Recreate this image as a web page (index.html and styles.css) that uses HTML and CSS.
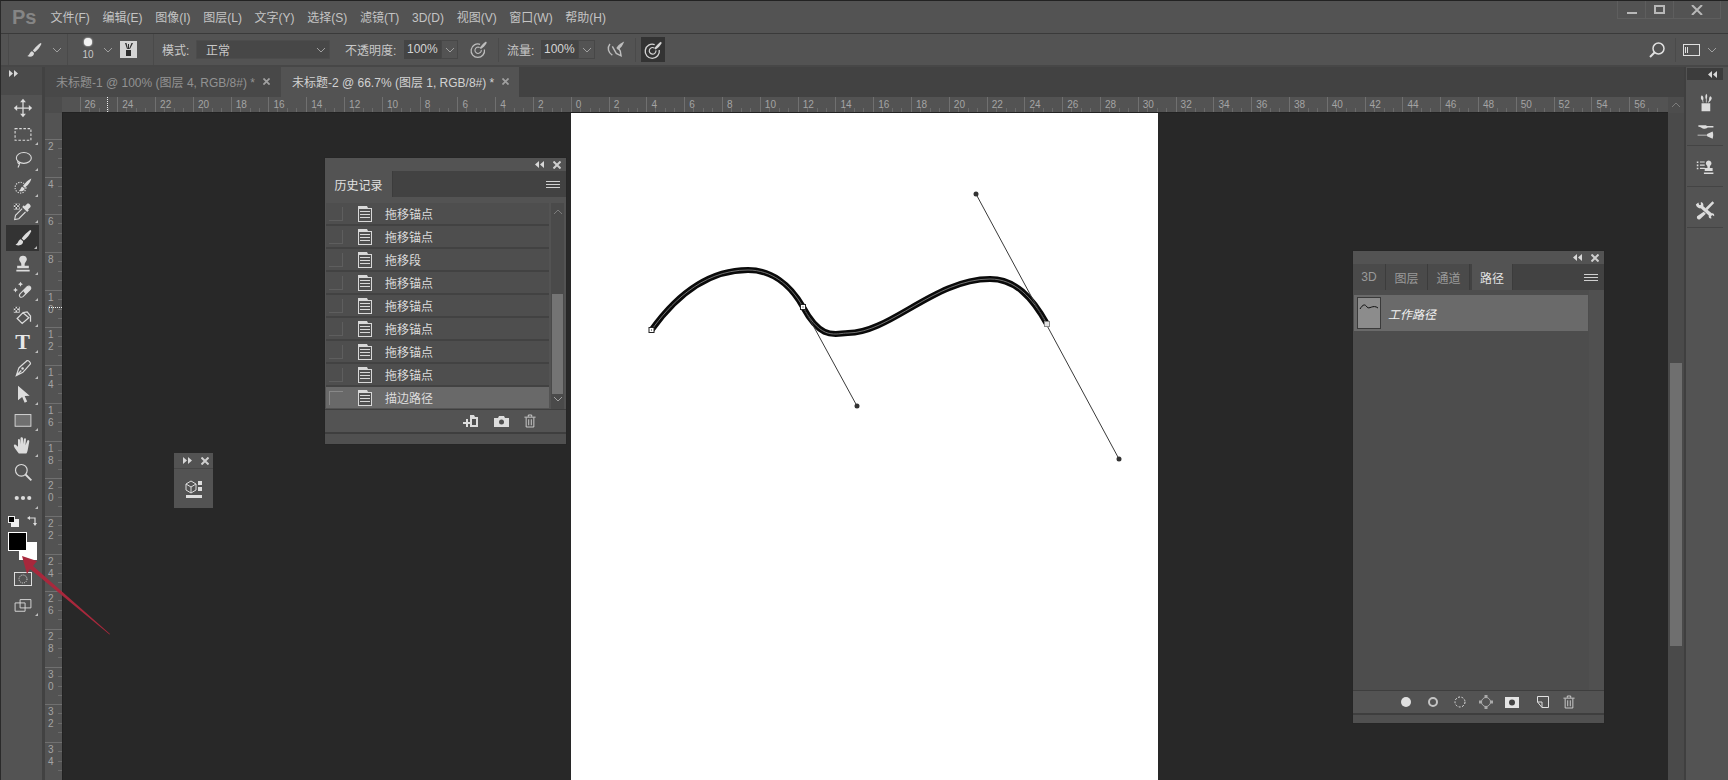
FILE: index.html
```html
<!DOCTYPE html>
<html lang="zh">
<head>
<meta charset="utf-8">
<title>Photoshop</title>
<link rel="stylesheet" href="styles.css">
</head>
<body>
<svg class="defs" width="0" height="0">
  <defs>
    <symbol id="i-brush" viewBox="0 0 24 24"><path fill="currentColor" d="M21 2.500c-3 1.500-8 6.500-10.500 10l2.500 2.500c3.500-2.800 7.500-7.500 9-11.500zM9.500 13.500c-3.500.8-2.500 4.500-6.500 6.500 4 2 9.500.5 9-4z"/></symbol>
    <symbol id="i-chev" viewBox="0 0 10 6"><path fill="none" stroke="currentColor" stroke-width="1" d="M1 1l4 4 4-4"/></symbol>
    <symbol id="i-doc" viewBox="0 0 14 16"><path fill="#d8d8d8" d="M0 0h9l1 2h4v14H0z"/><path fill="#505050" d="M1 3h12v12H1z"/><path stroke="#d8d8d8" d="M2 5.500h10M2 8.500h10M2 11.500h10"/></symbol>
    <symbol id="i-trash" viewBox="0 0 14 16"><path fill="none" stroke="currentColor" d="M2.500 4v11h9V4M.5 3.500h13M5 3V1h4v2M5.500 6v7M8.500 6v7"/></symbol>
    <symbol id="i-press" viewBox="0 0 24 24"><g fill="none" stroke="currentColor"><path stroke-width="1.600" d="M14 5.500A8.500 8.500 0 1 0 19.500 12"/><path stroke-width="1.400" d="M13.500 9.500a4 4 0 1 0 2 3"/></g><path fill="currentColor" d="M21.500 2c-2 1-6 5-8 8l1.500 1.500c3-2 6-5 7.500-8z"/></symbol>
    <symbol id="i-left2" viewBox="0 0 9 7"><path fill="currentColor" d="M4 0v7L0 3.500zM9 0v7L5 3.500z"/></symbol>
    <symbol id="i-right2" viewBox="0 0 9 7"><path fill="currentColor" d="M0 0v7l4-3.500zM5 0v7l4-3.500z"/></symbol>
    <symbol id="i-x" viewBox="0 0 8 8"><path stroke="currentColor" stroke-width="2" d="M.5.500l7 7M7.500.500l-7 7"/></symbol>
  </defs>
</svg>
<div class="app">
  <header class="titlebar">
    <div class="logo">Ps</div>
    <nav class="menu">
      <span>文件(F)</span><span>编辑(E)</span><span>图像(I)</span><span>图层(L)</span><span>文字(Y)</span><span>选择(S)</span><span>滤镜(T)</span><span>3D(D)</span><span>视图(V)</span><span>窗口(W)</span><span>帮助(H)</span>
    </nav>
    <div class="winbtns">
      <div class="winbtn w-min"><i class="w-min-glyph"></i></div>
      <div class="winbtn w-max"><i class="w-max-glyph"></i></div>
      <div class="winbtn w-close"><svg width="12" height="10" viewBox="0 0 12 10"><path stroke="#b8b8b8" stroke-width="2" d="M1 0l10 10M11 0L1 10"/></svg></div>
    </div>
  </header>

  <section class="options">
    <div class="opt-group g-tool">
      <svg class="ic-brush-opt"><use href="#i-brush"/></svg>
      <svg class="chev"><use href="#i-chev"/></svg>
    </div>
    <div class="opt-group g-size">
      <div class="sizepreview"><i class="dot"></i><span>10</span></div>
      <svg class="chev"><use href="#i-chev"/></svg>
      <div class="preset"><svg width="13" height="13" viewBox="0 0 13 13"><path fill="#2e2e2e" d="M4 7h5v6H4zM3 0h1.500L6 6H5zM6 1h1v5H6zM9.500 0H11L8 6H7z"/></svg></div>
    </div>
    <span class="lbl l-mode">模式:</span>
    <div class="select"><span>正常</span><svg class="chev"><use href="#i-chev"/></svg></div>
    <span class="lbl l-opacity">不透明度:</span>
    <div class="input i-opacity">100%</div>
    <div class="drop"><svg class="chev"><use href="#i-chev"/></svg></div>
    <svg class="press p-a"><use href="#i-press"/></svg>
    <i class="vsep s-a"></i>
    <span class="lbl l-flow">流量:</span>
    <div class="input i-flow">100%</div>
    <div class="drop"><svg class="chev"><use href="#i-chev"/></svg></div>
    <svg class="press p-b" viewBox="0 0 24 24"><path fill="none" stroke="currentColor" stroke-width="1.800" d="M5 5C1 10 3 16 8 19M8 8l5 9 6 3-1-6-3-5"/><path fill="currentColor" d="M23 2c-3 1-7 4-10 8l2.500 2.500c3-2 6-6 7.500-10.500z"/></svg>
    <i class="vsep s-b"></i>
    <div class="toggled"><svg><use href="#i-press"/></svg></div>
    <div class="opt-right">
      <svg class="search" viewBox="0 0 18 18"><circle cx="10.500" cy="7.500" r="5.500" fill="none" stroke="#e0e0e0" stroke-width="1.500"/><path stroke="#e0e0e0" stroke-width="2" d="M6.500 11.500L2 16"/></svg>
      <i class="vsep s-c"></i>
      <svg class="workspace" viewBox="0 0 17 12"><rect x=".5" y=".5" width="16" height="11" fill="none" stroke="#e0e0e0"/><path stroke="#e0e0e0" d="M2.500 3v6M4.500 3v6"/></svg>
      <svg class="chev c-work"><use href="#i-chev"/></svg>
    </div>
  </section>

  <main class="workspace-area">
    <aside class="toolbar">
      <div class="tool-head"><svg class="arrows"><use href="#i-right2"/></svg></div>
      <div class="tool"><svg viewBox="0 0 24 24"><path fill="none" stroke="currentColor" stroke-width="1.500" d="M12 4v16M4 12h16"/><path fill="currentColor" d="M12 1l3.500 4h-7zM12 23l-3.500-4h7zM1 12l4-3.500v7zM23 12l-4 3.500v-7z"/></svg></div>
      <div class="tool fly"><svg viewBox="0 0 24 24"><rect x="2.500" y="5.500" width="19" height="14" fill="none" stroke="currentColor" stroke-width="1.300" stroke-dasharray="3 2"/></svg></div>
      <div class="tool fly"><svg viewBox="0 0 24 24"><ellipse cx="13" cy="9.500" rx="9" ry="6.500" fill="none" stroke="currentColor" stroke-width="1.300"/><path fill="none" stroke="currentColor" stroke-width="1.300" d="M6 13c-1 3 1 4 2 2 0 2-1 4-2 6"/></svg></div>
      <div class="tool fly"><svg viewBox="0 0 24 24"><circle cx="9" cy="14" r="6.500" fill="none" stroke="currentColor" stroke-width="1.300" stroke-dasharray="1.500 1.500"/><path fill="currentColor" d="M22 3c-3 1-8 6-10 9l2 2c3-2 7-6 8-11zM11 13c-2 1-1 3-4 5 3 1 7 0 7-3z"/></svg></div>
      <div class="tool fly"><svg viewBox="0 0 24 24"><path fill="currentColor" d="M17 2c2-1 5 2 4 4l-3 3 1 1-2 2-6-6 2-2 1 1z"/><path fill="none" stroke="currentColor" stroke-width="1.300" d="M11 8l-8 8-1 5 5-1 8-8"/><path fill="#ddd" d="M1 2h7v7H1z"/><path fill="#333" d="M1 2h2v2H1zM5 2h2v2H5zM3 4h2v2H3zM7 4h1v2H7zM1 6h2v2H1zM5 6h2v2H5z"/></svg></div>
      <div class="tool fly active"><svg viewBox="0 0 24 24"><use href="#i-brush"/></svg></div>
      <div class="tool fly"><svg viewBox="0 0 24 24"><path fill="currentColor" d="M12 2a4.500 4.500 0 0 1 3 8c-1 1-1 2-1 4h5v3H5v-3h5c0-2 0-3-1-4a4.500 4.500 0 0 1 3-8zM4 19h16v2H4z"/></svg></div>
      <div class="tool fly"><svg viewBox="0 0 24 24"><path fill="none" stroke="currentColor" stroke-width="1.300" d="M9 16l8-8c3-2 6 1 3 4l-8 8c-3 2-6-1-3-4z"/><path fill="currentColor" d="M12 13l5-5c3-2 6 1 3 4l-5 5zM3 9l1 2 2 1-2 1-1 2-1-2-2-1 2-1zM9 2l1 2 2 1-2 1-1 2-1-2-2-1 2-1z"/></svg></div>
      <div class="tool fly"><svg viewBox="0 0 24 24"><path fill="none" stroke="currentColor" stroke-width="1.500" d="M12 8l-7 7 6 6 8-7zM12 8l5-1 4 5v7"/><path fill="#ddd" d="M1 1h7v7H1z"/><path fill="#333" d="M1 1h2v2H1zM5 1h2v2H5zM3 3h2v2H3zM1 5h2v2H1zM5 5h2v2H5z"/></svg></div>
      <div class="tool fly"><span class="type-t">T</span></div>
      <div class="tool fly"><svg viewBox="0 0 24 24"><path fill="none" stroke="currentColor" stroke-width="1.400" d="M4 21l3-9c4-4 8-7 10-9 2 0 4 2 4 4-2 2-5 6-9 10zM4 21l6-6"/><circle cx="11.500" cy="12.500" r="1.500" fill="currentColor"/></svg></div>
      <div class="tool fly"><svg viewBox="0 0 24 24"><path fill="currentColor" d="M6 2l14 12-6 .5 3 6.500-3 1.500-3-7-5 4z"/></svg></div>
      <div class="tool fly"><svg viewBox="0 0 24 24"><rect x="2.500" y="5.500" width="19" height="14" fill="#707070" stroke="currentColor" stroke-width="1.100"/></svg></div>
      <div class="tool fly"><svg viewBox="0 0 24 24"><path fill="currentColor" d="M7 21c-2-3-5-6-6-9 0-2 2-2 3-1l2 2V5c0-2 2-2 2.500 0L9 10V3c0-2 2.500-2 3 0v7l1-6c.5-2 3-1.500 2.500.5L15 11l2-5c.5-2 3-1 2.500 1L18 15c-.5 3-1 5-2 6z"/></svg></div>
      <div class="tool"><svg viewBox="0 0 24 24"><circle cx="10" cy="10" r="7" fill="none" stroke="currentColor" stroke-width="1.400"/><path stroke="currentColor" stroke-width="2.200" d="M15 15l7 7"/></svg></div>
      <div class="tool fly"><svg viewBox="0 0 24 24"><circle cx="4.500" cy="12" r="2.500" fill="currentColor"/><circle cx="12" cy="12" r="2.500" fill="currentColor"/><circle cx="19.500" cy="12" r="2.500" fill="currentColor"/></svg></div>
      <div class="color-mini">
        <svg class="defaults" viewBox="0 0 11 11"><rect x="3" y="3" width="8" height="8" fill="#eee"/><rect x=".5" y=".5" width="6" height="6" fill="#000" stroke="#eee"/></svg>
        <svg class="swap" viewBox="0 0 11 11"><path fill="none" stroke="#ddd" stroke-width="1.200" d="M3 2h5v6"/><path fill="#ddd" d="M3 0v4L0 2zM6 7h4l-2 3z"/></svg>
      </div>
      <div class="swatches"><i class="bg"></i><i class="fg"></i></div>
      <div class="mask-tool"><svg viewBox="0 0 18 14"><rect x=".5" y=".5" width="17" height="13" fill="none" stroke="#ddd"/><circle cx="9" cy="7" r="4" fill="none" stroke="#ddd" stroke-dasharray="1 1"/></svg></div>
      <div class="tool fly screen"><svg viewBox="0 0 24 24"><path fill="none" stroke="currentColor" stroke-width="1.100" d="M8.500 5.500h13v10h-13zM2.500 9.500h12v10h-12z"/></svg></div>
    </aside>

    <section class="docarea">
      <div class="tabs">
        <div class="tab"><span>未标题-1 @ 100% (图层 4, RGB/8#) *</span><svg class="tabx"><use href="#i-x"/></svg></div>
        <div class="tab current"><span>未标题-2 @ 66.7% (图层 1, RGB/8#) *</span><svg class="tabx"><use href="#i-x"/></svg></div>
      </div>
      <div class="view">
        <div class="corner"></div>
        <div class="hruler">
          <span>26</span><span>24</span><span>22</span><span>20</span><span>18</span><span>16</span><span>14</span><span>12</span><span>10</span><span>8</span><span>6</span><span>4</span><span>2</span><span>0</span><span>2</span><span>4</span><span>6</span><span>8</span><span>10</span><span>12</span><span>14</span><span>16</span><span>18</span><span>20</span><span>22</span><span>24</span><span>26</span><span>28</span><span>30</span><span>32</span><span>34</span><span>36</span><span>38</span><span>40</span><span>42</span><span>44</span><span>46</span><span>48</span><span>50</span><span>52</span><span>54</span><span>56</span>
        </div>
        <div class="sbhead"><svg class="chev up"><use href="#i-chev"/></svg></div>
        <div class="vruler">
          <span>2</span><span>4</span><span>6</span><span>8</span><span>1<br>0</span><span>1<br>2</span><span>1<br>4</span><span>1<br>6</span><span>1<br>8</span><span>2<br>0</span><span>2<br>2</span><span>2<br>4</span><span>2<br>6</span><span>2<br>8</span><span>3<br>0</span><span>3<br>2</span><span>3<br>4</span>
        </div>
        <div class="stage">
          <div class="page">
            <svg class="drawing" viewBox="571 113 587 667">
              <path class="stroke-ink" d="M651.500 330C668 307 700 270 748 270C771 270 790 284 803 307C822 342 836 333 848 333C890 333 935 279 990 279C1015 279 1032 297 1047 324"/>
              <path class="stroke-path" d="M651.500 330C668 307 700 270 748 270C771 270 790 284 803 307C822 342 836 333 848 333C890 333 935 279 990 279C1015 279 1032 297 1047 324"/>
              <path class="handle" d="M803 307L857 406M976 194L1119 459"/>
              <circle class="knob" cx="857" cy="406" r="2.500"/>
              <circle class="knob" cx="976" cy="194" r="2.500"/>
              <circle class="knob" cx="1119" cy="459" r="2.500"/>
              <rect class="anchor" x="649" y="327.500" width="5" height="5"/>
              <rect class="anchor-dot" x="651" y="329.500" width="1" height="1"/>
              <rect class="anchor" x="800.500" y="304.500" width="5" height="5"/>
              <rect class="anchor-dot" x="802.500" y="306.500" width="1" height="1"/>
              <rect class="anchor last" x="1044.500" y="321.500" width="5" height="5"/>
            </svg>
          </div>
        </div>
        <div class="vscroll"><div class="thumb"></div></div>
      </div>
    </section>

    <aside class="dock">
      <div class="dock-head"><svg class="arrows"><use href="#i-left2"/></svg></div>
      <div class="dock-group g-two">
        <svg viewBox="0 0 24 24"><path fill="currentColor" d="M7 13h11v10H7zM7 3c2 0 3 3 2 6l.5 3h-1L8 9C6 8 5.500 5 7 3zM13 1c2 2 1 5 .5 7v4h-1V8c-1-2-1-5 .5-7zM18 4c2 1 3 3 0 6l-2 2h-1l1.500-3c0-2 0-4 1.500-5z"/></svg>
        <svg viewBox="0 0 24 24"><path fill="currentColor" d="M3 4h8c2 0 3 1 4 1h7v2h-7c-1 0-2 2-5 1.500C8 8.500 6 6 3 6zM2 16h12v-1l7-3c1 3 1 6 0 9l-7-3v-1H2z"/></svg>
      </div>
      <div class="dock-group g-one">
        <svg viewBox="0 0 24 24"><path fill="currentColor" d="M1 3h2v2H1zM1 7h2v2H1zM1 11h2v2H1zM5 3h6v1.500H5zM5 7h6v1.500H5zM5 11h6v1.500H5zM16 2a3.500 3.500 0 0 1 2.500 6c-1 1-1 2-1 3.500H21V15H11v-3.500h3.500c0-1.500 0-2.500-1-3.500A3.500 3.500 0 0 1 16 2zM10 17h12v2H10z"/></svg>
      </div>
      <div class="dock-group g-one">
        <svg viewBox="0 0 24 24"><path fill="currentColor" d="M1 5.500L4 3l1 3 2 0 0-3.500c2.500.5 3.500 2.500 3 5l10 8.500c2-.500 3.500 1 3 3.500l-2.500-1.500-1.500 2 1 2c-2.500.5-4-1-3.500-3.500L7 10c-2.500.5-5-1-6-4.500z"/><path fill="currentColor" d="M21 1.500l2 2-8 8.500-2.500-2zM10.500 14l2.500 2.500-7 6.500c-2.500 1-4.500-1-3.500-3.500z"/></svg>
      </div>
    </aside>
  </main>

  <div class="float-mini">
    <div class="fhead"><svg class="arrows"><use href="#i-right2"/></svg><svg class="fx"><use href="#i-x"/></svg></div>
    <div class="mini-body"><svg width="18" height="18" viewBox="0 0 18 18"><path fill="none" stroke="#ddd" d="M6 1L1 4v6l5 3 5-3V4zM1 4l5 3 5-3M6 7v6"/><path fill="#ddd" d="M13 1h4v4h-4zM13 7h4v4h-4zM1 15h16v3H1z"/></svg></div>
  </div>

  <div class="panel history">
    <div class="fhead"><svg class="arrows"><use href="#i-left2"/></svg><svg class="fx"><use href="#i-x"/></svg></div>
    <div class="ptabs"><div class="ptab on">历史记录</div><div class="pmenu"><i></i><i></i><i></i></div></div>
    <div class="hbody">
      <div class="hrows">
        <div class="hrow"><i class="cb"></i><svg class="doc"><use href="#i-doc"/></svg><span>拖移锚点</span></div>
        <div class="hrow"><i class="cb"></i><svg class="doc"><use href="#i-doc"/></svg><span>拖移锚点</span></div>
        <div class="hrow"><i class="cb"></i><svg class="doc"><use href="#i-doc"/></svg><span>拖移段</span></div>
        <div class="hrow"><i class="cb"></i><svg class="doc"><use href="#i-doc"/></svg><span>拖移锚点</span></div>
        <div class="hrow"><i class="cb"></i><svg class="doc"><use href="#i-doc"/></svg><span>拖移锚点</span></div>
        <div class="hrow"><i class="cb"></i><svg class="doc"><use href="#i-doc"/></svg><span>拖移锚点</span></div>
        <div class="hrow"><i class="cb"></i><svg class="doc"><use href="#i-doc"/></svg><span>拖移锚点</span></div>
        <div class="hrow"><i class="cb"></i><svg class="doc"><use href="#i-doc"/></svg><span>拖移锚点</span></div>
        <div class="hrow sel"><i class="cb"></i><svg class="doc"><use href="#i-doc"/></svg><span>描边路径</span></div>
      </div>
      <div class="hscroll">
        <svg class="chev up"><use href="#i-chev"/></svg>
        <div class="hthumb"></div>
        <svg class="chev"><use href="#i-chev"/></svg>
      </div>
    </div>
    <div class="pfoot hfoot">
      <svg width="16" height="15" viewBox="0 0 16 15"><path fill="#ddd" d="M7 1h4l1 2h3v10H7zM0 8h3V5h2v3h3v2H5v3H3v-3H0z"/><path fill="#505050" d="M9 5h4v6H9z"/></svg>
      <svg width="15" height="13" viewBox="0 0 15 13"><path fill="#ddd" d="M0 3h4l1-2h5l1 2h4v9H0z"/><circle cx="7.500" cy="7" r="2.500" fill="#505050"/></svg>
      <svg class="trash"><use href="#i-trash"/></svg>
    </div>
    <div class="pgrip"></div>
  </div>

  <div class="panel paths">
    <div class="fhead"><svg class="arrows"><use href="#i-left2"/></svg><svg class="fx"><use href="#i-x"/></svg></div>
    <div class="ptabs">
      <div class="ptab t-3d">3D</div><div class="ptab">图层</div><div class="ptab">通道</div><div class="ptab on">路径</div>
      <div class="pmenu"><i></i><i></i><i></i></div>
    </div>
    <div class="pbody">
      <div class="pathrow">
        <div class="paththumb"><svg width="22" height="8" viewBox="0 0 22 8"><path fill="none" stroke="#111" d="M2 6C5 1 7 1 9 4c2 3 6-3 11 1"/></svg></div>
        <em>工作路径</em>
      </div>
    </div>
    <div class="pfoot pathfoot">
      <svg width="12" height="12" viewBox="0 0 12 12"><circle cx="6" cy="6" r="5" fill="#e0e0e0"/></svg>
      <svg width="12" height="12" viewBox="0 0 12 12"><circle cx="6" cy="6" r="4" fill="none" stroke="#c4c4c4" stroke-width="2"/></svg>
      <svg width="12" height="12" viewBox="0 0 12 12"><circle cx="6" cy="6" r="5" fill="none" stroke="#e0e0e0" stroke-dasharray="2 1.500"/></svg>
      <svg width="14" height="14" viewBox="0 0 14 14"><circle cx="7" cy="7" r="4.500" fill="none" stroke="#aaa"/><path fill="#aaa" d="M5.500 0h3v3h-3zM5.500 11h3v3h-3zM0 5.500h3v3H0zM11 5.500h3v3h-3z"/></svg>
      <svg width="14" height="11" viewBox="0 0 14 11"><rect width="14" height="11" fill="#e4e4e4"/><circle cx="7" cy="5.500" r="3" fill="#444"/></svg>
      <svg width="12" height="12" viewBox="0 0 12 12"><path fill="none" stroke="#e0e0e0" d="M11.500.5v11H5L.5 6V.5zM5 11.500V6H.5"/></svg>
      <svg class="trash"><use href="#i-trash"/></svg>
    </div>
    <div class="pgrip"></div>
  </div>

  <svg class="arrow" width="92" height="82" viewBox="0 0 92 82"><path fill="#a8283c" d="M2 2l15 5-4 5 77 68-.5.5L10 15l-3 5z"/></svg>
  <i class="cursor-h"></i>
  <i class="cursor-v"></i>
</div>
</body>
</html>
```

FILE: styles.css
```css
* { box-sizing: border-box; }
html, body { margin: 0; height: 100%; background: #282828; }
body { overflow: hidden; font-family: "Liberation Sans", "Noto Sans CJK SC", sans-serif; font-size: 12px; color: #c8c8c8; }
.defs { position: absolute; }
svg { display: block; }
i, b { font-style: normal; font-weight: normal; }

.app { position: relative; width: 1728px; height: 780px; background: #535353; display: flex; flex-direction: column; overflow: hidden; border-left: 1px solid #2a2a2a; border-top: 1px solid #222; }
.arrows { width: 9px; height: 7px; color: #d8d8d8; flex: none; }

/* title bar */
.titlebar { height: 33px; flex: none; display: flex; align-items: center; border-bottom: 1px solid #3a3a3a; position: relative; }
.logo { margin-left: 11px; width: 38.500px; font-size: 20px; font-weight: bold; color: #858585; padding-top: 1px; }
.menu { display: flex; gap: 12.700px; color: #c4c4c4; line-height: 16px; padding-top: 1px; }
.winbtns { margin-left: auto; margin-right: 7px; align-self: flex-start; display: flex; height: 18px; border: 1px solid #5e5e5e; border-top: 0; }
.winbtn { height: 100%; display: flex; align-items: center; justify-content: center; border-right: 1px solid #5e5e5e; }
.w-min { width: 28px; }
.w-max { width: 28px; }
.w-close { width: 46px; border-right: 0; }
.w-min-glyph { width: 10px; height: 2px; margin-top: 6px; background: #b8b8b8; }
.w-max-glyph { width: 11px; height: 9px; border: 2px solid #b8b8b8; border-width: 2px 2px; }

/* options bar */
.options { height: 33px; flex: none; display: flex; align-items: center; padding-left: 7px; border-bottom: 2px solid #474747; color: #c8c8c8; }
.opt-group { height: 100%; display: flex; align-items: center; position: relative; }
.g-tool { width: 60px; border-left: 1px solid #4a4a4a; border-right: 1px solid #4a4a4a; }
.ic-brush-opt { width: 18px; height: 18px; margin-left: 16px; color: #d8d8d8; }
.chev { width: 10px; height: 6px; color: #a0a0a0; flex: none; }
.g-tool .chev { margin-left: 9px; }
.g-size { width: 86px; border-right: 1px solid #4a4a4a; }
.sizepreview { width: 16px; margin-left: 12px; display: flex; flex-direction: column; align-items: center; font-size: 10px; line-height: 12px; }
.sizepreview .dot { width: 8px; height: 8px; border-radius: 50%; background: #f2f2f2; margin-bottom: 3px; box-shadow: 0 0 2px #fff; }
.g-size .chev { margin-left: 7px; }
.preset { width: 17px; height: 17px; margin-left: 7px; background: #d4d4d4; display: flex; align-items: center; justify-content: center; }
.lbl { flex: none; white-space: nowrap; }
.l-mode { margin-left: 8px; width: 29px; }
.select { width: 134px; height: 19px; margin-left: 5px; background: #474747; border-radius: 2px; display: flex; align-items: center; justify-content: space-between; padding: 0 4px 0 10px; box-shadow: inset 0 0 0 1px #4c4c4c; }
.l-opacity { margin-left: 15px; width: 53px; }
.input { width: 37px; height: 19px; line-height: 19px; background: #444; padding-left: 3px; font-size: 12px; color: #d4d4d4; }
.i-opacity { margin-left: 6px; }
.drop { width: 17px; height: 19px; border: 1px solid #474747; display: flex; align-items: center; justify-content: center; }
.press { width: 19px; height: 19px; color: #bdbdbd; flex: none; }
.p-a { margin-left: 11px; }
.vsep { flex: none; width: 1px; height: 24px; background: #4a4a4a; }
.s-a { margin-left: 10px; }
.l-flow { margin-left: 8px; width: 28px; }
.i-flow { margin-left: 6px; }
.p-b { margin-left: 11px; }
.s-b { margin-left: 10px; }
.toggled { width: 24px; height: 25px; margin-left: 5px; background: #333; display: flex; align-items: center; justify-content: center; color: #d4d4d4; }
.toggled svg { width: 20px; height: 20px; }
.opt-right { margin-left: auto; display: flex; align-items: center; padding-right: 11px; }
.search { width: 18px; height: 18px; }
.s-c { margin-left: 9px; }
.workspace { width: 17px; height: 12px; margin-left: 7px; }
.c-work { margin-left: 7px; }

/* working area */
.workspace-area { flex: 1; min-height: 0; display: flex; }
.toolbar { width: 44px; flex: none; padding: 0 2px 0 4px; border-right: 3px solid #424242; display: flex; flex-direction: column; align-items: stretch; }
.tool-head { height: 28px; flex: none; border-bottom: 1px solid #4a4a4a; background: #4a4a4a; margin: 0 -2px 0 -4px; padding: 3px 0 0 8px; }
.tool { position: relative; height: 26px; flex: none; display: flex; align-items: center; justify-content: center; color: #dcdcdc; }
.tool svg { width: 20px; height: 20px; }
.tool.active { background: #333; margin: 0 1px; height: 26px; }
.tool.fly::after { content: ""; position: absolute; right: 2px; bottom: 2px; border-left: 3px solid transparent; border-bottom: 3px solid #bdbdbd; }
.type-t { font-family: "Liberation Serif", serif; font-weight: bold; font-size: 22px; line-height: 22px; color: #e8e8e8; }
.color-mini { height: 20px; flex: none; display: flex; align-items: center; padding-left: 3px; }
.defaults { width: 11px; height: 11px; }
.swap { width: 11px; height: 11px; margin-left: 8px; }
.swatches { position: relative; height: 28px; flex: none; margin-top: 1px; }
.swatches .fg { position: absolute; left: 3px; top: 0; width: 19px; height: 19px; background: #000; border: 1px solid #fff; }
.swatches .bg { position: absolute; left: 14px; top: 10px; width: 18px; height: 18px; background: #fff; }
.mask-tool { height: 14px; flex: none; margin-top: 12px; padding-left: 9px; }
.mask-tool svg { width: 18px; height: 14px; }
.screen { margin-top: 6px; }

/* document area */
.docarea { flex: 1; min-width: 0; display: flex; flex-direction: column; }
.tabs { height: 30px; flex: none; background: #424242; display: flex; }
.tab { width: 236px; display: flex; align-items: center; padding: 0 0 1px 11px; color: #929292; white-space: nowrap; background: #484848; }
.tabx { width: 7px; height: 7px; margin-left: 8px; color: #a0a0a0; flex: none; }
.tab.current { width: 238px; background: #535353; color: #d2d2d2; }
.view { flex: 1; min-height: 0; display: grid; grid-template-columns: 17px 1fr 16px; grid-template-rows: 16px 1fr; }
.corner { background: #4c4c4c; }
.hruler { padding-left: 17.500px; display: flex; overflow: hidden; background: #535353; border-bottom: 1px solid #222; font-size: 10px; color: #a4a4a4; line-height: 16px; }
.hruler span { flex: 0 0 37.800px; padding-left: 4px; border-left: 1px solid #707070; background: repeating-linear-gradient(90deg, transparent 0 8.450px, #6a6a6a 8.450px 9.450px) left bottom / 100% 4px no-repeat; }
.sbhead { background: #4d4d4d; display: flex; justify-content: center; padding-top: 5px; }
.up { transform: scaleY(-1); color: #7c7c7c; }
.vruler { padding-top: 26px; overflow: hidden; background: #535353; font-size: 10px; line-height: 12px; color: #a4a4a4; display: flex; flex-direction: column; }
.vruler span { flex: 0 0 37.700px; padding: 1px 0 0 3px; border-top: 1px solid #707070; background: repeating-linear-gradient(180deg, transparent 0 8.450px, #6a6a6a 8.450px 9.450px) right top / 4px 100% no-repeat; }
.stage { background: #282828; min-width: 0; min-height: 0; overflow: hidden; border-left: 1px solid #222; }
.page { width: 587px; height: 100%; margin-left: 508px; background: #fff; }
.drawing { width: 100%; height: 100%; }
.stroke-ink { fill: none; stroke: #0a0a0a; stroke-width: 6; }
.stroke-path { fill: none; stroke: #8c8c8c; stroke-width: .8; }
.handle { fill: none; stroke: #3a3a3a; stroke-width: 1; }
.knob { fill: #333; }
.anchor { fill: #fff; stroke: #222; stroke-width: 1; }
.anchor-dot { fill: #222; }
.anchor.last { fill: #e4e4e4; stroke: #888; }
.vscroll { background: #4a4a4a; padding: 250px 2px 0; }
.thumb { height: 283px; background: #6f6f6f; }

/* right dock */
.dock { width: 44px; flex: none; padding-left: 3px; padding-right: 5px; background: linear-gradient(90deg, #3f3f3f 0 2px, #535353 2px); }
.dock-head { height: 12px; margin-top: 1px; display: flex; justify-content: flex-end; align-items: center; padding-right: 6px; background: #3c3c3c; }
.dock-group { display: flex; flex-direction: column; align-items: center; color: #dcdcdc; border-bottom: 1px solid #444; }
.dock-group svg { width: 19px; height: 19px; }
.g-two { height: 66px; padding-top: 13px; gap: 10px; }
.g-one { height: 41px; justify-content: center; padding-top: 5px; }
.dock-group:last-child svg { width: 20px; height: 20px; }

/* floating panels */
.fhead { height: 13px; flex: none; display: flex; justify-content: flex-end; align-items: center; gap: 9px; padding-right: 5px; }
.fx { width: 8px; height: 8px; color: #cfcfcf; flex: none; }
.panel { position: absolute; display: flex; flex-direction: column; background: #535353; box-shadow: 0 0 0 1px #262626; }
.ptabs { display: flex; height: 26px; flex: none; background: #424242; }
.ptab { display: flex; align-items: center; justify-content: center; color: #9a9a9a; border-right: 1px solid #3c3c3c; background: #4a4a4a; }
.ptab.on { background: #535353; color: #e2e2e2; }
.pmenu { margin-left: auto; width: 20px; display: flex; flex-direction: column; justify-content: center; gap: 2px; padding-right: 6px; }
.pmenu i { display: block; height: 1px; background: #d0d0d0; }
.pfoot { flex: none; display: flex; align-items: center; border-top: 1px solid #3e3e3e; border-bottom: 2px solid #3e3e3e; }
.trash { width: 12px; height: 14px; color: #dcdcdc; }
.pgrip { height: 10px; flex: none; background: #505050; }

.history { left: 324px; top: 157px; width: 241px; height: 286px; }
.history .ptab { width: 68px; background: #535353; }
.hbody { flex: 1; min-height: 0; display: flex; padding: 6px 2px 0 1px; }
.hrows { width: 223px; flex: none; display: flex; flex-direction: column; }
.hrow { height: 23px; flex: none; display: flex; align-items: center; background: #4e4e4e; border-bottom: 2px solid #424242; color: #dcdcdc; }
.hrow .cb { width: 14px; height: 14px; margin-left: 3px; border-right: 1px solid #5e5e5e; border-bottom: 1px solid #5e5e5e; }
.doc { width: 14px; height: 16px; margin-left: 15px; }
.hrow span { margin-left: 13px; }
.hrow.sel { background: #696969; border-bottom: 0; height: 21px; }
.hrow.sel .cb { border: 0; border-left: 1px solid #888; border-top: 1px solid #888; }
.hscroll { flex: 1; margin-left: 2px; display: flex; flex-direction: column; align-items: center; background: #4a4a4a; padding-top: 6px; }
.hthumb { width: 11px; height: 100px; margin-top: 79px; margin-bottom: 2px; background: #747474; }
.hfoot { height: 25px; padding-left: 138px; gap: 15px; }

.paths { left: 1352px; top: 250px; width: 251px; height: 472px; }
.paths .ptab { width: 42px; }
.paths .t-3d { width: 33px; }
.paths .ptab.on { width: 41px; margin-left: 2px; }
.paths .pgrip { height: 8px; }
.pbody { flex: 1; min-height: 0; background: #4d4d4d; padding: 5px 16px 0 1px; box-shadow: inset -15px 0 0 #505050; }
.pathrow { height: 36px; background: #6a6a6a; display: flex; align-items: center; padding-left: 3px; color: #f0f0f0; }
.paththumb { width: 24px; height: 32px; background: #8c8c8c; border: 1px solid #3a3a3a; display: flex; justify-content: center; padding-top: 5px; }
.pathrow em { margin-left: 7px; }
.pathfoot { height: 25px; padding-left: 47px; }
.pathfoot svg:nth-child(2) { margin-left: 15px; }
.pathfoot svg:nth-child(3) { margin-left: 15px; }
.pathfoot svg:nth-child(4) { margin-left: 13px; }
.pathfoot svg:nth-child(5) { margin-left: 12px; }
.pathfoot svg:nth-child(6) { margin-left: 18px; }
.pathfoot svg:nth-child(7) { margin-left: 14px; }

.float-mini { position: absolute; left: 173px; top: 452px; width: 39px; height: 55px; background: #535353; display: flex; flex-direction: column; }
.float-mini .fhead { height: 15px; justify-content: space-between; padding: 0 5px 0 9px; }
.mini-body { flex: 1; display: flex; justify-content: center; align-items: center; border-top: 1px solid #474747; }

/* overlays */
.arrow { position: absolute; left: 19px; top: 553px; }
.cursor-h { position: absolute; left: 106px; top: 96px; height: 15px; border-left: 1px dotted #eee; }
.cursor-v { position: absolute; left: 48px; top: 306px; width: 13px; border-top: 1px dotted #eee; }
```
